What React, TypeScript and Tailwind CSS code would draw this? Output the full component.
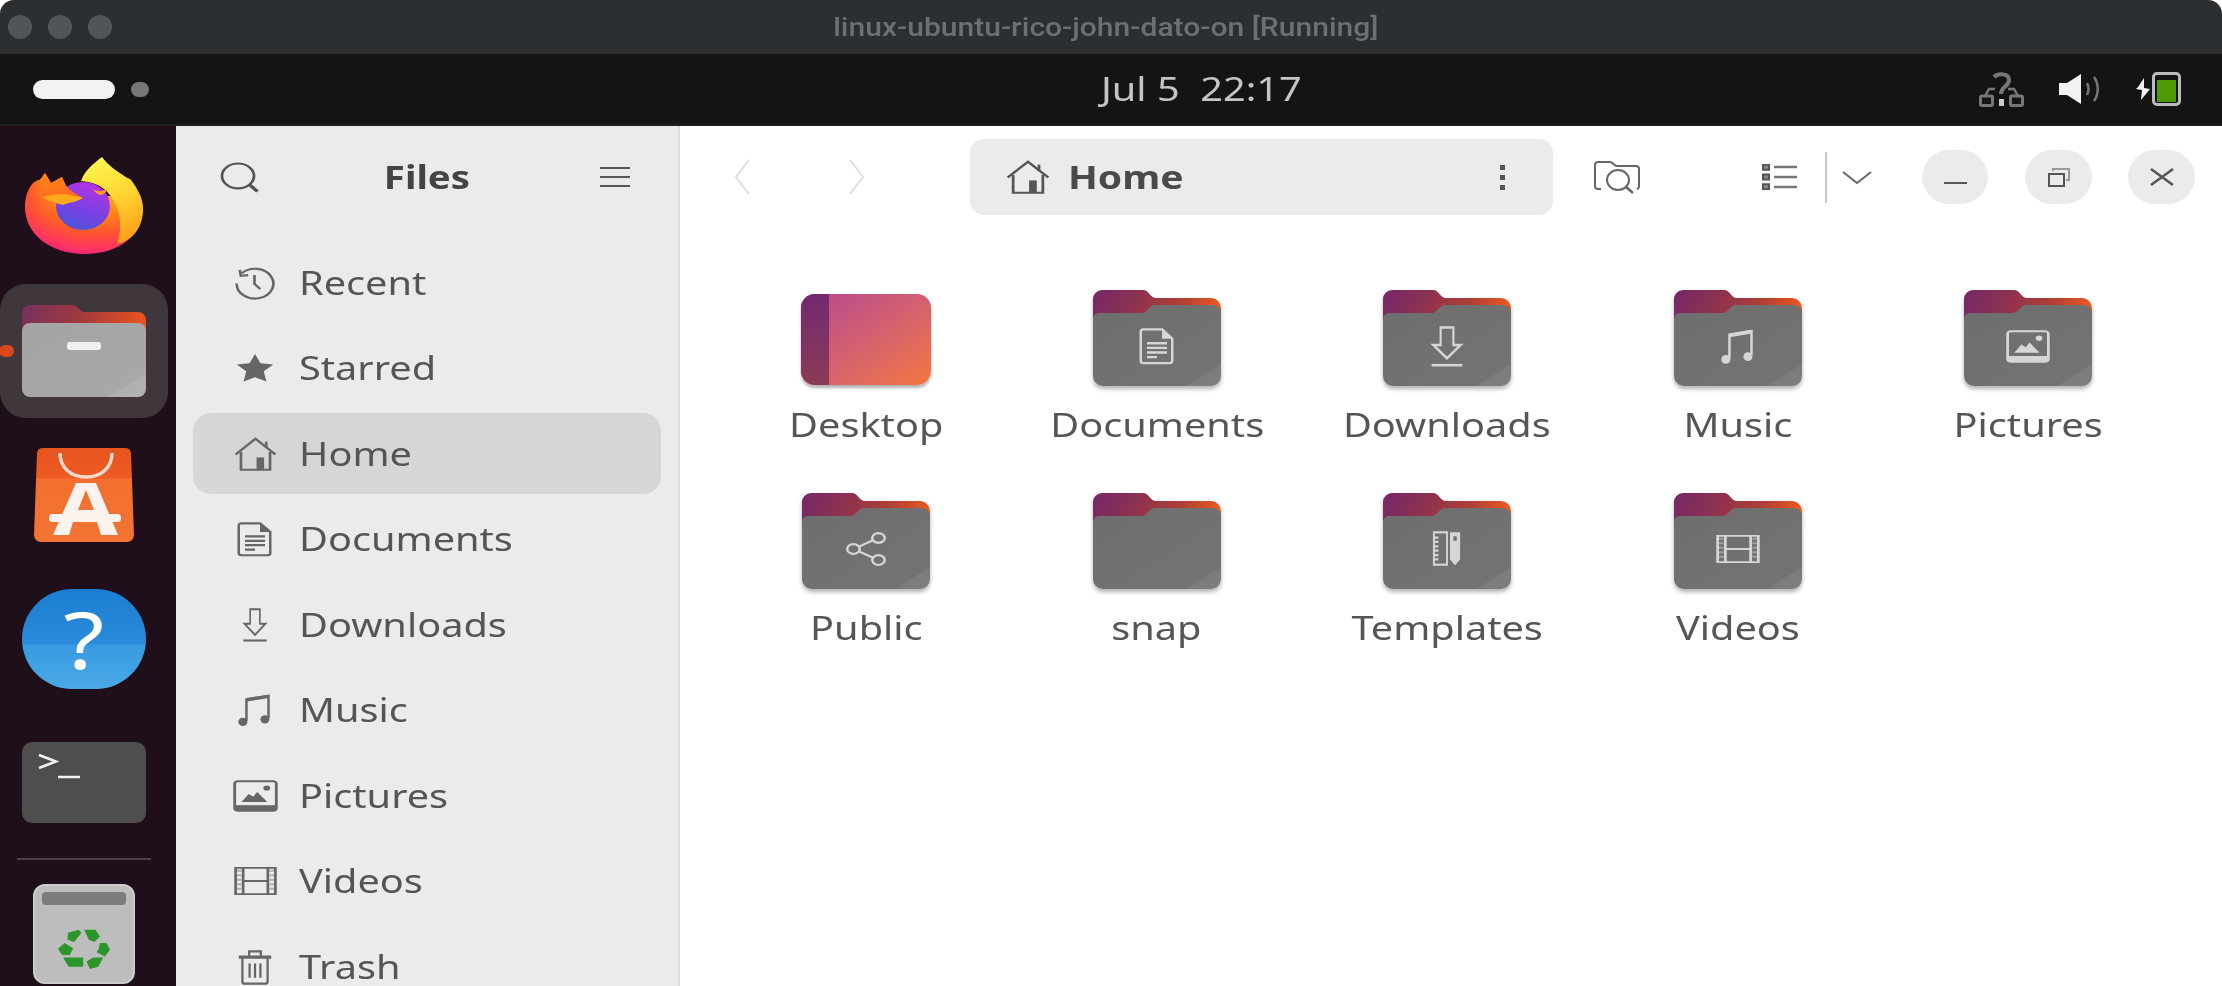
import { useId, type ReactNode } from 'react';

type IconProps = { className?: string };

function Svg({ className, children, view = '0 0 16 16' }: IconProps & { children: ReactNode; view?: string }) {
  return (
    <svg viewBox={view} preserveAspectRatio="none" fill="none" stroke="currentColor" strokeWidth="1" className={className}>
      {children}
    </svg>
  );
}

const RecentIcon = ({ className }: IconProps) => (
  <Svg className={className}>
    <path d="M3 3.4A7 7 0 1 1 1 8.2" />
    <path d="M2.2 1.8l.4 2.8 2.8-.3" />
    <path d="M7.8 4.2v4.2l2.2 2.4" />
  </Svg>
);
const StarIcon = ({ className }: IconProps) => (
  <Svg className={className}>
    <path fill="currentColor" stroke="none" d="M8 .5l2.3 5 5.4.6-4 3.6 1.1 5.5L8 12.9l-4.8 2.3 1.1-5.5-4-3.6 5.4-.6z" />
  </Svg>
);
const HomeIcon = ({ className }: IconProps) => (
  <Svg className={className}>
    <path d="M.6 8.2L8 .8l7.4 7.4" />
    <path d="M12 2.2v3" />
    <path d="M2.6 7v8.4h10.8V7" />
    <rect x="8.4" y="9.6" width="2.8" height="5.8" fill="currentColor" stroke="none" />
  </Svg>
);
const DocIcon = ({ className }: IconProps) => (
  <Svg className={className}>
    <path d="M2.5.6h7.6l4 4v9.6a1 1 0 0 1-1 1H2.5a1 1 0 0 1-1-1V1.6a1 1 0 0 1 1-1z" />
    <path fill="currentColor" stroke="none" d="M10 .6l4.1 4H10z" />
    <path d="M4 6.6h8M4 8.6h8M4 10.6h8M4 12.6h4" />
  </Svg>
);
const DownloadIcon = ({ className }: IconProps) => (
  <Svg className={className}>
    <path d="M5 .6h6v6.8h3.4L8 12.6 1.6 7.4H5z" />
    <path d="M.8 15.3h14.4" />
  </Svg>
);
const MusicIcon = ({ className }: IconProps) => (
  <Svg className={className}>
    <path strokeWidth="1.1" d="M4.2 13.2V3L14 1.4v10.4" />
    <path strokeWidth="1.6" d="M4.2 3.2L14 1.6" />
    <ellipse cx="2.6" cy="13.6" rx="2" ry="1.9" fill="currentColor" stroke="none" />
    <ellipse cx="12.4" cy="12.4" rx="2" ry="1.9" fill="currentColor" stroke="none" />
  </Svg>
);
const PictureIcon = ({ className }: IconProps) => (
  <Svg className={className}>
    <rect x=".6" y=".6" width="14.8" height="14.8" rx="1.2" />
    <rect x=".6" y="12.6" width="14.8" height="2.8" fill="currentColor" stroke="none" />
    <path fill="currentColor" stroke="none" d="M3 11l2.6-4 1.6 1.4L8.6 6l3.6 5z" />
    <ellipse cx="12" cy="4" rx="1.2" ry="1.3" fill="currentColor" stroke="none" />
  </Svg>
);
const VideoIcon = ({ className }: IconProps) => (
  <Svg className={className}>
    <path d="M.6 1h14.8v14H.6zM3.4 1v14M12.6 1v14M3.4 8h9.2" />
    <path strokeDasharray="1 1.4" strokeWidth="2" d="M1.8 2v12M14.2 2v12" stroke="currentColor" opacity=".45" />
  </Svg>
);
const TrashIcon = ({ className }: IconProps) => (
  <Svg className={className}>
    <path strokeWidth="1.4" d="M.8 3.6h14.4" />
    <path d="M5.4 3.2V1h5.2v2.2" />
    <path d="M2.4 4v10.4a1 1 0 0 0 1 1h9.2a1 1 0 0 0 1-1V4" />
    <path d="M5.6 6.4v6.4M8 6.4v6.4M10.4 6.4v6.4" />
  </Svg>
);
const ShareIcon = ({ className }: IconProps) => (
  <Svg className={className}>
    <ellipse cx="13" cy="2.8" rx="2.5" ry="2.3" />
    <ellipse cx="3" cy="8" rx="2.5" ry="2.3" />
    <ellipse cx="13" cy="13.2" rx="2.5" ry="2.3" />
    <path d="M5.2 6.9l5.6-3M5.2 9.1l5.6 3" />
  </Svg>
);
const TemplateIcon = ({ className }: IconProps) => (
  <Svg className={className}>
    <rect x="1" y=".6" width="7" height="14.8" />
    <path d="M1 3h2.4M1 5h2.4M1 7h2.4M1 9h2.4M1 11h2.4M1 13h2.4" />
    <path fill="currentColor" stroke="none" d="M9.6.6h5.4v12.4l-2.7 2.6-2.7-2.6zM11.4 2.4v2h1.8v-2z" />
  </Svg>
);

function Folder({ glyph }: { glyph?: ReactNode }) {
  const id = useId();
  return (
    <div className="relative h-[96px] w-[128px] drop-shadow-[0_3px_2px_rgba(0,0,0,0.3)]">
      <svg viewBox="0 0 128 96" preserveAspectRatio="none" className="block h-full w-full">
        <defs>
          <linearGradient id={`${id}b`} x1="0" y1="0" x2="1" y2="0.25">
            <stop offset="0" stopColor="#74286a" />
            <stop offset="0.35" stopColor="#8c3150" />
            <stop offset="0.7" stopColor="#b03f35" />
            <stop offset="1" stopColor="#ee5a1e" />
          </linearGradient>
          <linearGradient id={`${id}f`} x1="0" y1="0" x2="1" y2="1">
            <stop offset="0" stopColor="#6e6e6e" />
            <stop offset="0.86" stopColor="#737373" />
            <stop offset="0.87" stopColor="#7c7c7c" />
            <stop offset="1" stopColor="#7e7e7e" />
          </linearGradient>
        </defs>
        <path fill={`url(#${id}b)`} d="M0 9a9 9 0 0 1 9-9h41c6 0 7 8 13 8h55a10 10 0 0 1 10 10v40H0z" />
        <path fill={`url(#${id}f)`} d="M0 29a6 6 0 0 1 6-6h42c7 0 8-8 14-8h58a8 8 0 0 1 8 8v63a10 10 0 0 1-10 10H10A10 10 0 0 1 0 86z" />
      </svg>
      {glyph && <div className="absolute inset-x-0 bottom-[11px] top-[27px] flex items-center justify-center text-[#d6d6d6]">{glyph}</div>}
    </div>
  );
}

function DesktopFolder() {
  return (
    <div className="mt-[3px] flex h-[91px] w-[130px] overflow-hidden rounded-[14px] bg-gradient-to-br from-[#b5468f] to-[#f4763a] shadow-[0_3px_3px_rgba(0,0,0,0.3)]">
      <div className="h-full w-[28px] bg-gradient-to-b from-[#74286f] to-[#8b3a55]" />
    </div>
  );
}

function FirefoxLogo() {
  return (
    <svg viewBox="0 0 118 98" preserveAspectRatio="none" className="h-[98px] w-[118px]">
      <defs>
        <linearGradient id="ffy" x1="0.4" y1="0" x2="0.7" y2="1">
          <stop offset="0" stopColor="#fff44f" />
          <stop offset="0.5" stopColor="#ffd22e" />
          <stop offset="1" stopColor="#ff9a1a" />
        </linearGradient>
        <radialGradient id="ffb" cx="0.6" cy="0.15" r="0.95">
          <stop offset="0" stopColor="#ffb82e" />
          <stop offset="0.35" stopColor="#ff8f16" />
          <stop offset="0.6" stopColor="#ff5a2a" />
          <stop offset="0.82" stopColor="#ff3560" />
          <stop offset="1" stopColor="#e0158c" />
        </radialGradient>
        <linearGradient id="ffe" x1="0" y1="0" x2="0.4" y2="1">
          <stop offset="0" stopColor="#ff8a14" />
          <stop offset="1" stopColor="#ff6a1e" />
        </linearGradient>
        <linearGradient id="ffg" x1="0.7" y1="0" x2="0.3" y2="1">
          <stop offset="0" stopColor="#b833e1" />
          <stop offset="0.6" stopColor="#7542e5" />
          <stop offset="1" stopColor="#4a55d8" />
        </linearGradient>
      </defs>
      <path fill="url(#ffb)" d="M20 17l6 10 11-6 4 9 19 10h25c20 2 33 12 33 12 0 26-23 46-58 46C25 98 0 78 0 51c0-13 6-26 14-27 3-2 4-4 6-7z" />
      <path fill="url(#ffy)" d="M77 1c7 9 13 13 21 18 3 3 6 3 8 5 6 8 12 18 12 28 0 20-10 32-26 36 6-16 4-36-8-50-8-10-18-12-28-13 4-11 12-17 21-24z" />
      <ellipse cx="58" cy="50" rx="27" ry="24" fill="url(#ffg)" />
      <path fill="url(#ffe)" d="M20 17l6 10 11-6 4 9c5 6 11 8 17 12-14-2-28-2-41-1-7-10-1-19 3-24z" />
      <path fill="#ffa91c" d="M17 41c7-2 15-3 22-3 6 1 13 2 19 4-6 4-13 4-20 7-7-2-15-4-21-8z" />
      <path fill="#ff9a1a" d="M68 33c5 3 10 3 15-1-2 5-5 7-8 7-3-1-5-3-7-6z" />
    </svg>
  );
}

function StoreLogo() {
  return (
    <svg viewBox="0 0 100 94" preserveAspectRatio="none" className="h-[94px] w-[100px]">
      <defs>
        <linearGradient id="stb" x1="0" y1="0" x2="0" y2="1">
          <stop offset="0" stopColor="#e8541f" />
          <stop offset="0.32" stopColor="#ed5a22" />
          <stop offset="0.33" stopColor="#f36f30" />
          <stop offset="1" stopColor="#f37432" />
        </linearGradient>
      </defs>
      <path fill="url(#stb)" d="M9 0h82a6 6 0 0 1 6 5l3 82a7 7 0 0 1-7 7H7a7 7 0 0 1-7-7L3 5a6 6 0 0 1 6-5z" />
      <path d="M26 5c0 14 10 24 26 24s26-10 26-24" fill="none" stroke="#f3d9cc" strokeWidth="3.5" />
      <path fill="#fdf3ee" fillRule="evenodd" d="M42 35h20l22 52H67l-4-13H39l-4 13H19zM44 62h16l-8-20z" />
      <rect x="15" y="66" width="72" height="8" rx="3.5" fill="#fdf3ee" />
    </svg>
  );
}

function RecycleLogo() {
  return (
    <svg viewBox="0 0 155 125" preserveAspectRatio="none" className="h-[42px] w-[52px]">
      <g fill="#2c962a">
        <path d="M30 14l32-9 8 10-22 27-20-7z" />
        <path d="M78 5h34l13 20-17 17-16-7z" />
        <path d="M125 45h20l10 20-15 20-25-13 7-12z" />
        <path d="M105 88h30l-15 27-25 7-10-22z" />
        <path d="M15 88h60v27H32z" />
        <path d="M20 45l25 15-10 20H12L0 62z" />
      </g>
    </svg>
  );
}

function Dock() {
  return (
    <aside className="flex h-full w-[176px] shrink-0 flex-col items-center bg-[#1e0f1a] pr-[8px]">
      <div className="mt-[30px]">
        <FirefoxLogo />
      </div>
      <div className="relative mt-[30px] flex h-[134px] w-[168px] items-center justify-center rounded-[26px] bg-[#3f373c]">
        <svg viewBox="0 0 124 92" preserveAspectRatio="none" className="h-[92px] w-[124px]">
          <defs>
            <linearGradient id="dkb" x1="0" y1="0" x2="1" y2="0.2">
              <stop offset="0" stopColor="#77305f" />
              <stop offset="0.5" stopColor="#a03a3e" />
              <stop offset="1" stopColor="#e9531f" />
            </linearGradient>
            <linearGradient id="dkf" x1="0" y1="0" x2="1" y2="1">
              <stop offset="0" stopColor="#a4a4a4" />
              <stop offset="0.84" stopColor="#a8a8a8" />
              <stop offset="0.85" stopColor="#b0b0b0" />
              <stop offset="1" stopColor="#b2b2b2" />
            </linearGradient>
          </defs>
          <path fill="url(#dkb)" d="M0 8a8 8 0 0 1 8-8h42c6 0 7 7 13 7h53a8 8 0 0 1 8 8v30H0z" />
          <rect x="0" y="18" width="124" height="74" rx="8" fill="url(#dkf)" />
        </svg>
        <div className="absolute left-[67px] top-[58px] h-[8px] w-[34px] rounded-[3px] bg-[#f0f0f0]" />
        <div className="absolute -left-[1px] top-[61px] h-[12px] w-[15px] rounded-full bg-[#d9481c]" />
      </div>
      <div className="mt-[30px]">
        <StoreLogo />
      </div>
      <div className="mt-[47px] flex h-[100px] w-[124px] items-center justify-center rounded-full bg-[linear-gradient(to_bottom,#1b7dd2,#2b8bdb_55%,#379ae0_56%,#4aa9e6)] font-['Noto_Sans',sans-serif] text-[78px] leading-none text-white">
        <span className="scale-x-[1.2]">?</span>
      </div>
      <div className="mt-[53px] h-[81px] w-[124px] rounded-[10px] bg-[#4e4e4e] pl-[16px] pt-[11px]">
        <svg viewBox="0 0 44 26" className="h-[26px] w-[44px]" fill="none" stroke="#f2f2f2" strokeWidth="2.5">
          <path d="M1 2l17 6.5L1 15M20 24h22" />
        </svg>
      </div>
      <div className="mt-[35px] h-[2px] w-[134px] bg-[#49404a]" />
      <div className="mt-[24px] flex h-[100px] w-[102px] shrink-0 flex-col items-center rounded-[12px] border-2 border-[#cdcdcd] bg-[#bdbdbd] pt-[6px]">
        <div className="h-[13px] w-[84px] rounded-[4px] bg-[#7c7c7c]" />
        <div className="mt-[23px]">
          <RecycleLogo />
        </div>
      </div>
    </aside>
  );
}

const places = [
  { name: 'Recent', icon: <RecentIcon className="h-[34px] w-[42px]" /> },
  { name: 'Starred', icon: <StarIcon className="h-[30px] w-[38px]" /> },
  { name: 'Home', icon: <HomeIcon className="h-[34px] w-[43px]" />, active: true },
  { name: 'Documents', icon: <DocIcon className="h-[35px] w-[40px]" /> },
  { name: 'Downloads', icon: <DownloadIcon className="h-[34px] w-[26px]" /> },
  { name: 'Music', icon: <MusicIcon className="h-[34px] w-[36px]" /> },
  { name: 'Pictures', icon: <PictureIcon className="h-[32px] w-[45px]" /> },
  { name: 'Videos', icon: <VideoIcon className="h-[30px] w-[43px]" /> },
  { name: 'Trash', icon: <TrashIcon className="h-[36px] w-[36px]" /> },
];

const folders = [
  { name: 'Desktop', desktop: true },
  { name: 'Documents', glyph: <DocIcon className="h-[37px] w-[40px]" /> },
  { name: 'Downloads', glyph: <DownloadIcon className="h-[41px] w-[34px]" /> },
  { name: 'Music', glyph: <MusicIcon className="h-[37px] w-[36px]" /> },
  { name: 'Pictures', glyph: <PictureIcon className="h-[33px] w-[44px]" /> },
  { name: 'Public', glyph: <ShareIcon className="h-[34px] w-[40px]" /> },
  { name: 'snap' },
  { name: 'Templates', glyph: <TemplateIcon className="h-[35px] w-[30px]" /> },
  { name: 'Videos', glyph: <VideoIcon className="h-[30px] w-[44px]" /> },
];

function Sidebar() {
  return (
    <nav className="h-full w-[504px] shrink-0 border-r-2 border-[#dcdcdc] bg-[#ebebeb] text-[#555]">
      <div className="flex h-[102px] items-center justify-between pl-[44px] pr-[48px]">
        <svg viewBox="0 0 16 16" preserveAspectRatio="none" fill="none" stroke="#555" strokeWidth="1.1" className="h-[31px] w-[40px]">
          <ellipse cx="7.2" cy="7.2" rx="6.4" ry="6.4" />
          <path strokeWidth="1.5" d="M11.8 11.8l3.2 3.4" />
        </svg>
        <span className="mr-[6px] origin-center scale-x-[1.2] font-['Noto_Sans',sans-serif] text-[32px] font-bold leading-none text-[#444]">Files</span>
        <svg viewBox="0 0 30 22" fill="none" stroke="#555" strokeWidth="2" className="h-[22px] w-[30px]">
          <path d="M0 2h30M0 11h30M0 20h30" />
        </svg>
      </div>
      <ul className="mt-[12px] flex flex-col">
        {places.map(item => (
          <li key={item.name} className="flex h-[85.5px] shrink-0 items-center px-[17px]">
            <div className={`flex h-[81px] w-full items-center rounded-[18px] ${item.active ? 'bg-[#d6d6d6]' : ''}`}>
              <div className="ml-[36px] flex w-[52px] justify-center text-[#666]">{item.icon}</div>
              <span className="ml-[18px] origin-left scale-x-[1.24] font-['Noto_Sans',sans-serif] text-[32px] leading-none">{item.name}</span>
            </div>
          </li>
        ))}
      </ul>
    </nav>
  );
}

function Toolbar() {
  return (
    <header className="flex h-[102px] items-center pl-[54px]">
      <svg viewBox="0 0 16 36" fill="none" stroke="#dedede" strokeWidth="2" className="h-[36px] w-[16px]">
        <path d="M15 1L2 18l13 17" />
      </svg>
      <svg viewBox="0 0 16 36" fill="none" stroke="#dedede" strokeWidth="2" className="ml-[99px] h-[36px] w-[16px]">
        <path d="M1 1l13 17L1 35" />
      </svg>
      <div className="ml-[105px] flex h-[76px] w-[583px] items-center rounded-[14px] bg-[#ebebeb] pl-[36px] pr-[48px] text-[#555]">
        <HomeIcon className="h-[34px] w-[44px]" />
        <span className="ml-[18px] origin-left scale-x-[1.22] font-['Noto_Sans',sans-serif] text-[32px] font-bold leading-none text-[#4a4a4a]">Home</span>
        <div className="ml-auto flex flex-col gap-[5px]">
          <div className="h-[5px] w-[5px] bg-[#555]" />
          <div className="h-[5px] w-[5px] bg-[#555]" />
          <div className="h-[5px] w-[5px] bg-[#555]" />
        </div>
      </div>
      <svg viewBox="0 0 46 34" fill="none" stroke="#666" strokeWidth="2" className="ml-[41px] h-[34px] w-[46px]">
        <path d="M7 29H4a3 3 0 0 1-3-3V5a3 3 0 0 1 3-3h12c3 0 4 4 7 4h19a3 3 0 0 1 3 3v18a3 3 0 0 1-2 2" />
        <ellipse cx="24" cy="20" rx="11" ry="10" />
        <path strokeWidth="2.5" d="M32 27l7 6" />
      </svg>
      <svg viewBox="0 0 35 26" fill="none" className="ml-[122px] h-[26px] w-[35px]">
        <path stroke="#777" strokeWidth="2.5" d="M12 3h23M12 13h23M12 23h23" />
        <path stroke="#555" strokeWidth="2" fill="#888" d="M1 0.8h6v5H1zM1 10.6h6v5H1zM1 20.2h6v5H1z" />
      </svg>
      <div className="ml-[28px] h-[51px] w-[2px] bg-[#c8c8c8]" />
      <svg viewBox="0 0 30 14" fill="none" stroke="#666" strokeWidth="2" className="ml-[15px] mt-[2px] h-[14px] w-[30px]">
        <path d="M1 1l14 11L29 1" />
      </svg>
      <button className="ml-[50px] flex h-[54px] w-[66px] items-center justify-center rounded-full bg-[#ebebeb]">
        <div className="mt-[12px] h-[2px] w-[23px] bg-[#555]" />
      </button>
      <button className="ml-[37px] flex h-[54px] w-[67px] items-center justify-center rounded-full bg-[#ebebeb]">
        <svg viewBox="0 0 22 19" fill="none" stroke="#555" strokeWidth="2" className="h-[19px] w-[22px]">
          <path d="M1 6h15v12H1z" />
          <path stroke="#999" d="M5 3V1h16v11h-3" />
        </svg>
      </button>
      <button className="ml-[36px] flex h-[54px] w-[67px] items-center justify-center rounded-full bg-[#ebebeb]">
        <svg viewBox="0 0 24 18" fill="none" stroke="#555" strokeWidth="2.5" className="h-[18px] w-[24px]">
          <path d="M1 1l22 16M23 1L1 17" />
        </svg>
      </button>
    </header>
  );
}

function FileGrid() {
  return (
    <div className="grid auto-rows-[202.5px] grid-cols-[repeat(5,290.5px)] pl-[41px] pt-[62px]">
      {folders.map(item => (
        <div key={item.name} className="flex flex-col items-center">
          <div className="flex h-[96px] items-center">{item.desktop ? <DesktopFolder /> : <Folder glyph={item.glyph} />}</div>
          <span className="mt-[19px] scale-x-[1.24] font-['Noto_Sans',sans-serif] text-[32px] leading-[40px] text-[#555]">{item.name}</span>
        </div>
      ))}
    </div>
  );
}

function TopPanel() {
  return (
    <div className="relative flex h-[72px] shrink-0 items-center justify-between border-b-2 border-[#1f1f1f] bg-[#141414] pl-[33px] pr-[41px]">
      <div className="flex items-center gap-[16px]">
        <div className="h-[19px] w-[82px] rounded-full bg-[#f2f2f2]" />
        <div className="h-[15px] w-[18px] rounded-full bg-[#777]" />
      </div>
      <span className="absolute left-[1101px] origin-left scale-x-[1.24] whitespace-pre font-['Noto_Sans',sans-serif] text-[32px] leading-none text-[#c4c4c4]">Jul 5  22:17</span>
      <div className="flex items-center">
        <svg viewBox="0 0 45 35" fill="none" stroke="#777" strokeWidth="3" className="h-[35px] w-[45px]">
          <path strokeWidth="4" d="M15 5c4-4 15-4 15 3 0 7-8 6-8 14" />
          <path strokeWidth="2.5" d="M16 17H10L6 24M29 17h6l4 7" />
          <rect x="1.5" y="24" width="12" height="9.5" rx="1.5" />
          <rect x="31.5" y="24" width="12" height="9.5" rx="1.5" />
          <rect x="20" y="27" width="5" height="7" fill="#ccc" stroke="none" />
        </svg>
        <svg viewBox="0 0 42 30" fill="none" className="ml-[35px] h-[30px] w-[42px]">
          <path fill="#f2f2f2" d="M0 9h8L22 0v30L8 21H0z" />
          <path stroke="#777" strokeWidth="2.5" d="M28 9c2 4 2 8 0 12M35 3c5 7 5 17 0 24" />
        </svg>
        <svg viewBox="0 0 14 22" className="ml-[35px] h-[22px] w-[14px]">
          <path fill="#f2f2f2" d="M8 0L2 9 0 11l6 1-1 10 9-11-6-1z" />
        </svg>
        <div className="ml-[2px] flex h-[34px] w-[29px] flex-col justify-end rounded-[5px] border-[3px] border-[#bbb] px-[2px] pb-[1px]">
          <div className="h-[22px] w-full bg-[#4e9a06]" />
        </div>
      </div>
    </div>
  );
}

export default function App() {
  return (
    <div className="flex h-[986px] w-[2222px] flex-col overflow-hidden bg-white blur-[0.6px]">
      <div className="relative flex h-[54px] shrink-0 items-center gap-[16px] rounded-t-[14px] bg-[#2c2f32] pl-[8px]">
        <div className="h-[24px] w-[24px] rounded-full bg-[#505558]" />
        <div className="h-[24px] w-[24px] rounded-full bg-[#505558]" />
        <div className="h-[24px] w-[24px] rounded-full bg-[#505558]" />
        <span className="absolute inset-x-0 scale-x-[1.155] pr-[9px] text-center font-['Roboto',sans-serif] text-[26px] font-medium text-[#6c7074]">linux-ubuntu-rico-john-dato-on [Running]</span>
      </div>
      <TopPanel />
      <div className="flex min-h-0 flex-1 overflow-hidden">
        <Dock />
        <Sidebar />
        <main className="min-w-0 flex-1">
          <Toolbar />
          <FileGrid />
        </main>
      </div>
    </div>
  );
}
